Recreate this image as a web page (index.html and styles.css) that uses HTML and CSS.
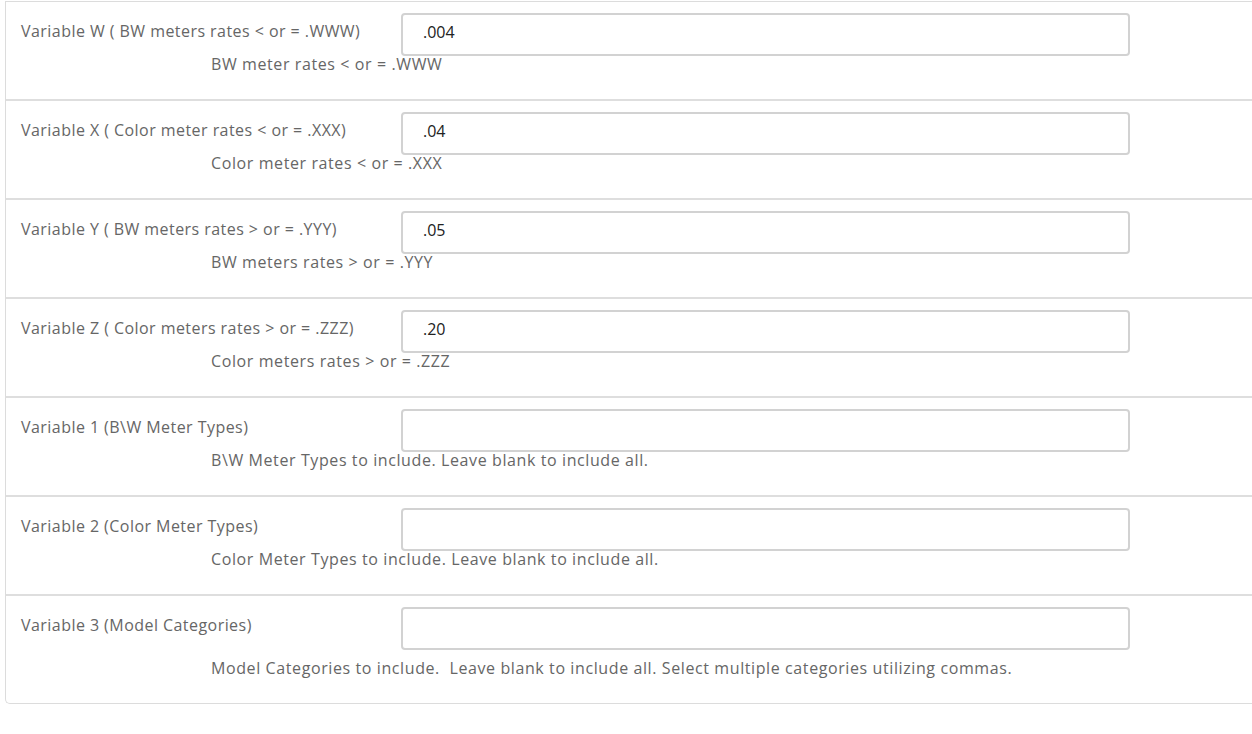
FILE: index.html
```
<!DOCTYPE html>
<html lang="en">
<head>
<meta charset="UTF-8" />
<title>Variables</title>
<link rel="stylesheet" href="styles.css">
</head>
<body>
  <div class="panel">
    <div class="field">
      <label class="field-label">Variable W ( BW meters rates &lt; or = .WWW)</label>
      <input class="field-input" type="text" value=".004" />
      <div class="field-help">BW meter rates &lt; or = .WWW</div>
    </div>
    <div class="field">
      <label class="field-label">Variable X ( Color meter rates &lt; or = .XXX)</label>
      <input class="field-input" type="text" value=".04" />
      <div class="field-help">Color meter rates &lt; or = .XXX</div>
    </div>
    <div class="field">
      <label class="field-label">Variable Y ( BW meters rates &gt; or = .YYY)</label>
      <input class="field-input" type="text" value=".05" />
      <div class="field-help">BW meters rates &gt; or = .YYY</div>
    </div>
    <div class="field">
      <label class="field-label">Variable Z ( Color meters rates &gt; or = .ZZZ)</label>
      <input class="field-input" type="text" value=".20" />
      <div class="field-help">Color meters rates &gt; or = .ZZZ</div>
    </div>
    <div class="field">
      <label class="field-label">Variable 1 (B\W Meter Types)</label>
      <input class="field-input" type="text" value="" />
      <div class="field-help">B\W Meter Types to include. Leave blank to include all.</div>
    </div>
    <div class="field">
      <label class="field-label">Variable 2 (Color Meter Types)</label>
      <input class="field-input" type="text" value="" />
      <div class="field-help">Color Meter Types to include. Leave blank to include all.</div>
    </div>
    <div class="field field-last">
      <label class="field-label">Variable 3 (Model Categories)</label>
      <input class="field-input" type="text" value="" />
      <div class="field-help">Model Categories to include.  Leave blank to include all. Select multiple categories utilizing commas.</div>
    </div>
  </div>
</body>
</html>
```
FILE: styles.css
```
html, body {
  margin: 0;
  padding: 0;
  overflow: hidden;
  background: #fff;
  font-family: "Open Sans", Roboto, sans-serif;
}
.panel {
  margin: 1px 0 0 5px;
  width: 1270px;
  border: 1px solid #dcdcdc;
  border-right: none;
  border-radius: 0 0 0 5px;
}
.field {
  display: grid;
  grid-template-columns: 380px 729px;
  align-content: start;
  height: 86px;
  padding: 11px 0 0 15px;
  border-bottom: 2px solid #dedede;
}
.field-label {
  font-size: 16px;
  line-height: 20px;
  letter-spacing: 0.45px;
  color: #666;
  padding-top: 8px;
}
.field-input {
  box-sizing: border-box;
  height: 43px;
  margin: 0;
  padding: 0 20px 5px;
  border: 2px solid #d2d2d2;
  border-radius: 4px;
  font-family: inherit;
  font-size: 16px;
  color: #222;
  outline: none;
}
.field-help {
  grid-column: 1 / 3;
  padding-left: 190px;
  font-size: 16px;
  line-height: 16px;
  letter-spacing: 0.6px;
  color: #666;
  white-space: pre;
}
.field-last {
  height: 96px;
  border-bottom: none;
}
.field-last .field-help {
  margin-top: 10px;
}
```
